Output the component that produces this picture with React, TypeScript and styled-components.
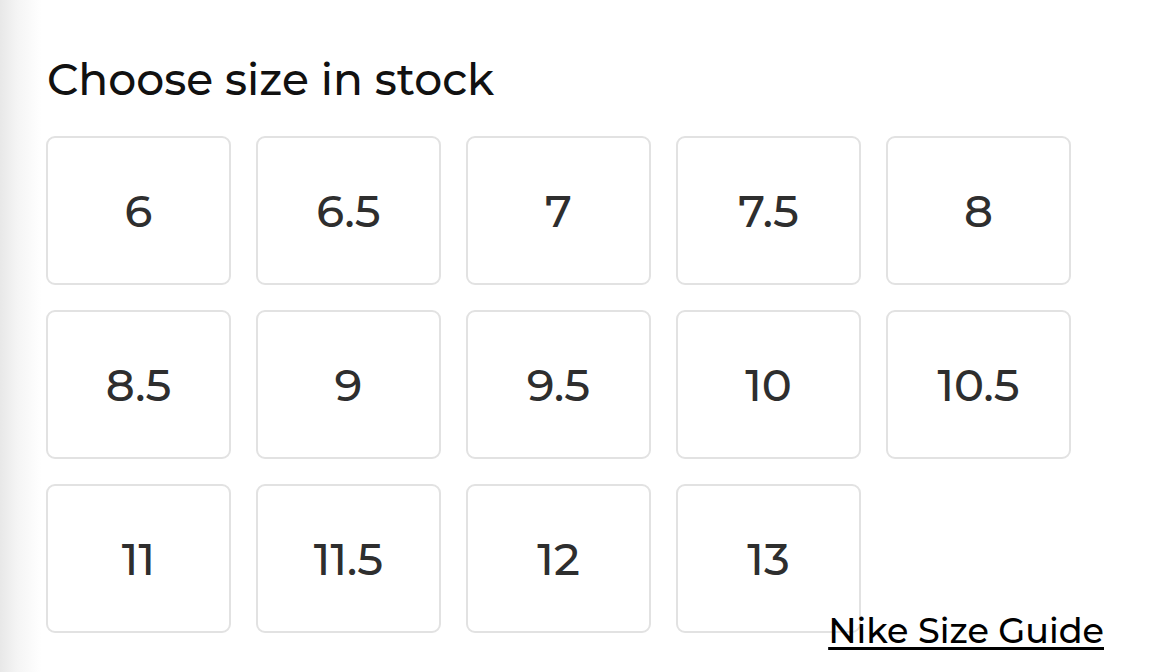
import React from "react";
import styled, { createGlobalStyle } from "styled-components";

const GlobalStyle = createGlobalStyle`
  html, body {
    margin: 0;
    padding: 0;
    background: #ffffff;
  }
  body {
    font-family: Montserrat, "Open Sans", Arial, sans-serif;
  }
`;

const Page = styled.main`
  box-sizing: border-box;
  width: 1169px;
  height: 672px;
  overflow: hidden;
  padding: 53px 0 0 46px;
  background: linear-gradient(to right, #e8e8e8 0px, #f5f5f5 18px, #ffffff 42px);
`;

const Section = styled.section`
  width: 1058px;
  display: flex;
  flex-direction: column;
`;

const Title = styled.h2`
  margin: 0 0 0 1px;
  font-size: 44px;
  line-height: 52px;
  font-weight: 500;
  color: #111111;
`;

const SizeGrid = styled.div`
  margin-top: 31px;
  display: grid;
  grid-template-columns: repeat(5, 185px);
  grid-auto-rows: 149px;
  column-gap: 25px;
  row-gap: 25px;
`;

const SizeButton = styled.button`
  box-sizing: border-box;
  display: flex;
  align-items: center;
  justify-content: center;
  border: 2.5px solid #e2e2e2;
  border-radius: 9px;
  background: #ffffff;
  font-family: Montserrat, "Open Sans", Arial, sans-serif;
  font-size: 45px;
  font-weight: 500;
  color: #2e2e2e;
  padding: 0;
  cursor: pointer;
`;

const FooterRow = styled.div`
  display: flex;
  justify-content: flex-end;
  margin-top: -22px;
`;

const GuideLink = styled.a`
  font-size: 35px;
  line-height: 40px;
  font-weight: 500;
  color: #000000;
  text-decoration: underline;
  text-decoration-thickness: 3px;
  text-underline-offset: 4px;
  cursor: pointer;
`;

const sizes = [
  "6", "6.5", "7", "7.5", "8",
  "8.5", "9", "9.5", "10", "10.5",
  "11", "11.5", "12", "13",
];

export default function App() {
  return (
    <>
      <GlobalStyle />
      <Page>
        <Section>
          <Title>Choose size in stock</Title>
          <SizeGrid>
            {sizes.map((s) => (
              <SizeButton key={s} type="button">
                {s}
              </SizeButton>
            ))}
          </SizeGrid>
          <FooterRow>
            <GuideLink>Nike Size Guide</GuideLink>
          </FooterRow>
        </Section>
      </Page>
    </>
  );
}
